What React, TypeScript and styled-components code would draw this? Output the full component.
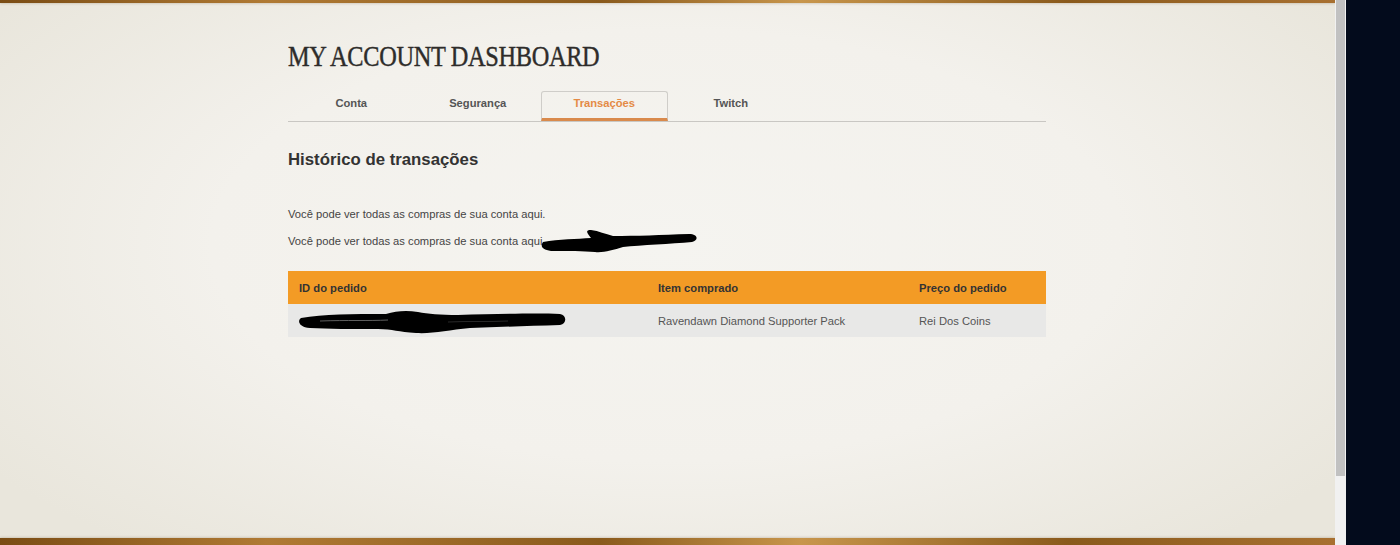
import * as React from 'react';
import styled, { createGlobalStyle } from 'styled-components';

const GlobalStyle = createGlobalStyle`
  html, body {
    margin: 0;
    padding: 0;
    height: 545px;
    overflow: hidden;
    background: #030b1c;
  }
`;

const Screen = styled.div`
  display: flex;
  width: 1400px;
  height: 545px;
`;

const Frame = styled.div`
  width: 1335px;
  height: 545px;
  display: flex;
  flex-direction: column;
  background:
    radial-gradient(ellipse 62% 72% at 50% 45%, #f5f4f0 0%, #f3f1ec 55%, #e9e6dc 100%);
`;

const GoldBand = styled.div<{ $h: number }>`
  height: ${(p) => p.$h}px;
  flex-shrink: 0;
  background: linear-gradient(
    90deg,
    #7a4c14 0%,
    #b07a34 20%,
    #8a5a1c 45%,
    #c8964c 60%,
    #8a5a1c 80%,
    #a87030 100%
  );
  box-shadow: 0 0 3px rgba(90, 60, 20, 0.35);
`;

const Body = styled.div`
  flex: 1;
  padding: 0 0 0 288px;
`;

const Content = styled.div`
  width: 758px;
  font-family: 'Liberation Sans', Arial, sans-serif;
`;

const Title = styled.h1`
  margin: 36px 0 0;
  font-family: 'Liberation Serif', 'Times New Roman', serif;
  font-weight: normal;
  font-size: 29px;
  letter-spacing: -0.4px;
  line-height: 34px;
  color: #2e2c2a;
  -webkit-text-stroke: 0.4px #2e2c2a;
  transform: scaleX(0.84);
  transform-origin: left center;
  white-space: nowrap;
`;

const TabBar = styled.div`
  display: flex;
  margin-top: 18px;
  border-bottom: 1px solid #c9c7c3;
`;

const Tab = styled.div<{ $active?: boolean }>`
  width: 126.5px;
  height: 30px;
  box-sizing: border-box;
  display: flex;
  align-items: center;
  justify-content: center;
  font-size: 11.2px;
  font-weight: bold;
  color: ${(p) => (p.$active ? '#e48a45' : '#555')};
  border: 1px solid ${(p) => (p.$active ? '#cfcdc9' : 'transparent')};
  border-bottom: 3px solid ${(p) => (p.$active ? '#d98a4c' : 'transparent')};
  border-radius: 3px 3px 0 0;
  padding-bottom: 4px;
`;

const Heading = styled.h2`
  margin: 28px 0 0;
  font-size: 16.8px;
  font-weight: bold;
  color: #333;
  line-height: 20px;
`;

const Note = styled.p`
  margin: 0;
  font-size: 11.2px;
  color: #444;
  line-height: 14px;
  height: 14px;
  display: flex;
  align-items: center;
`;

const Notes = styled.div`
  display: flex;
  flex-direction: column;
  gap: 13px;
  margin-top: 37px;
`;

const Table = styled.div`
  margin-top: 23px;
`;

const Row = styled.div<{ $head?: boolean }>`
  display: grid;
  grid-template-columns: 359px 261px 1fr;
  height: 33px;
  align-items: center;
  padding-left: 11px;
  font-size: 11.2px;
  background: ${(p) => (p.$head ? '#f39b25' : '#e8e8e7')};
  color: ${(p) => (p.$head ? '#333' : '#555')};
  font-weight: ${(p) => (p.$head ? 'bold' : 'normal')};
`;

const Cell = styled.div`
  display: flex;
  align-items: center;
  height: 33px;
`;

const Scrollbar = styled.div`
  width: 11px;
  height: 545px;
  background: #f1f1f1;
  display: flex;
  justify-content: center;
`;

const Thumb = styled.div`
  width: 9px;
  height: 476px;
  background: #c1c1c1;
`;

const Side = styled.div`
  flex: 1;
  background: #030b1c;
`;

const Redact = styled.svg`
  display: block;
  flex-shrink: 0;
  margin-top: -8px;
  margin-bottom: -8px;
`;

const ScribbleShort = () => (
  <Redact width="158" height="26" viewBox="0 0 158 26" style={{ marginLeft: -4 }}>
    <path
      d="M2 14 C 18 11, 36 11, 50 10 C 47 6, 43 2, 50 2 C 58 3, 64 6, 72 8 C 95 8, 120 7, 148 6 C 157 6, 158 12, 151 14 C 130 16, 100 17, 82 19 C 72 22, 62 25, 54 24 C 42 23, 28 23, 10 23 C 1 22, -1 18, 2 14 Z"
      fill="#000"
    />
  </Redact>
);

const ScribbleLong = () => (
  <Redact width="270" height="30" viewBox="0 0 270 30" style={{ marginLeft: -1 }}>
    <path
      d="M3 12 C 25 8, 55 8, 88 8 C 98 5, 108 4, 120 6 C 130 8, 142 9, 160 9 C 200 8, 238 7, 262 8 C 269 9, 269 18, 262 19 C 230 20, 200 21, 172 22 C 150 24, 135 28, 118 27 C 100 26, 95 23, 80 23 C 55 23, 30 23, 12 22 C 1 21, -1 15, 3 12 Z"
      fill="#000"
    />
    <path d="M22 15 C 50 14, 70 15, 90 14" stroke="#777" strokeWidth="0.8" fill="none" />
    <path d="M150 16 C 170 15, 190 16, 210 15" stroke="#444" strokeWidth="0.6" fill="none" />
  </Redact>
);

export default function App() {
  return (
    <>
      <GlobalStyle />
      <Screen>
        <Frame>
          <GoldBand $h={3} />
          <Body>
            <Content>
              <Title>MY ACCOUNT DASHBOARD</Title>
              <TabBar>
                <Tab>Conta</Tab>
                <Tab>Segurança</Tab>
                <Tab $active>Transações</Tab>
                <Tab>Twitch</Tab>
              </TabBar>
              <Heading>Histórico de transações</Heading>
              <Notes>
                <Note>Você pode ver todas as compras de sua conta aqui.</Note>
                <Note>
                  Você pode ver todas as compras de sua conta aqui.
                  <ScribbleShort />
                </Note>
              </Notes>
              <Table>
                <Row $head>
                  <Cell>ID do pedido</Cell>
                  <Cell>Item comprado</Cell>
                  <Cell>Preço do pedido</Cell>
                </Row>
                <Row>
                  <Cell>
                    <ScribbleLong />
                  </Cell>
                  <Cell>Ravendawn Diamond Supporter Pack</Cell>
                  <Cell>Rei Dos Coins</Cell>
                </Row>
              </Table>
            </Content>
          </Body>
          <GoldBand $h={7} />
        </Frame>
        <Scrollbar>
          <Thumb />
        </Scrollbar>
        <Side />
      </Screen>
    </>
  );
}
